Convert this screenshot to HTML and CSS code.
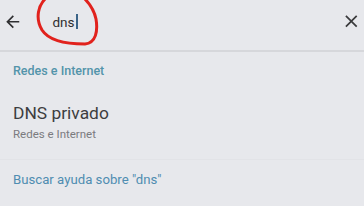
FILE: index.html
```html
<!DOCTYPE html>
<html lang="es">
<head>
<meta charset="utf-8">
<link rel="stylesheet" href="styles.css">
</head>
<body>
<div class="page">
  <header class="search-bar">
    <svg class="back" viewBox="0 0 24 24" width="19.5" height="19.5"><path d="M20 11H7.83l5.59-5.59L12 4l-8 8 8 8 1.41-1.41L7.83 13H20v-2z" fill="#2f2f31"/></svg>
    <div class="query"><span class="q-text">dns</span><span class="caret"></span></div>
    <svg class="close" viewBox="0 0 24 24" width="20.6" height="20.6"><path d="M19 6.41L17.59 5 12 10.59 6.41 5 5 6.41 10.59 12 5 17.59 6.41 19 12 13.41 17.59 19 19 17.59 13.41 12z" fill="#3a3a3c"/></svg>
    <svg class="scribble" viewBox="0 0 70 50" width="70" height="50"><path d="M12 -3 C3 5 0 18 7 30 C14 41 32 44 50 44 C61 43 63 31 61 19 C59 9 54 3 49 -2" fill="none" stroke="#e1221d" stroke-width="3" stroke-linecap="round"/></svg>
  </header>
  <div class="results">
    <div class="section-title">Redes e Internet</div>
    <div class="item">
      <div class="item-title">DNS privado</div>
      <div class="item-sub">Redes e Internet</div>
    </div>
    <div class="divider"></div>
    <div class="help-link">Buscar ayuda sobre "dns"</div>
  </div>
</div>
</body>
</html>
```

FILE: styles.css
```css
html, body {
  margin: 0;
  padding: 0;
  background: #e7e8ec;
}
body {
  font-family: Roboto, "Noto Sans", "Liberation Sans", sans-serif;
  width: 364px;
  height: 206px;
  overflow: hidden;
}
.search-bar {
  position: relative;
  display: flex;
  align-items: center;
  height: 43px;
  padding-bottom: 7px;
  border-bottom: 2px solid #d6d7db;
}
.back {
  margin-left: 3px;
  flex: none;
}
.query {
  display: flex;
  align-items: center;
  margin-left: 30px;
  flex: 1;
}
.q-text {
  font-size: 13.5px;
  color: #2e2e30;
  line-height: 16px;
}
.caret {
  width: 2px;
  height: 15px;
  background: #3b6488;
  margin-left: 1px;
}
.close {
  flex: none;
  margin-right: 2px;
}
.scribble {
  position: absolute;
  left: 35px;
  top: 0;
}
.results {
  padding-left: 13px;
}
.section-title {
  margin-top: 11px;
  font-size: 12.5px;
  line-height: 16px;
  font-weight: 500;
  color: #5394aa;
}
.item {
  margin-top: 23px;
}
.item-title {
  font-size: 17.4px;
  line-height: 22px;
  color: #3d3d40;
}
.item-sub {
  margin-top: 2px;
  font-size: 11.5px;
  line-height: 16px;
  color: #7b7b7f;
}
.divider {
  margin: 17px 0 0 -13px;
  height: 1px;
  background: #e2e3e7;
}
.help-link {
  margin-top: 11px;
  font-size: 13.2px;
  line-height: 18px;
  color: #4f8db1;
}
```
